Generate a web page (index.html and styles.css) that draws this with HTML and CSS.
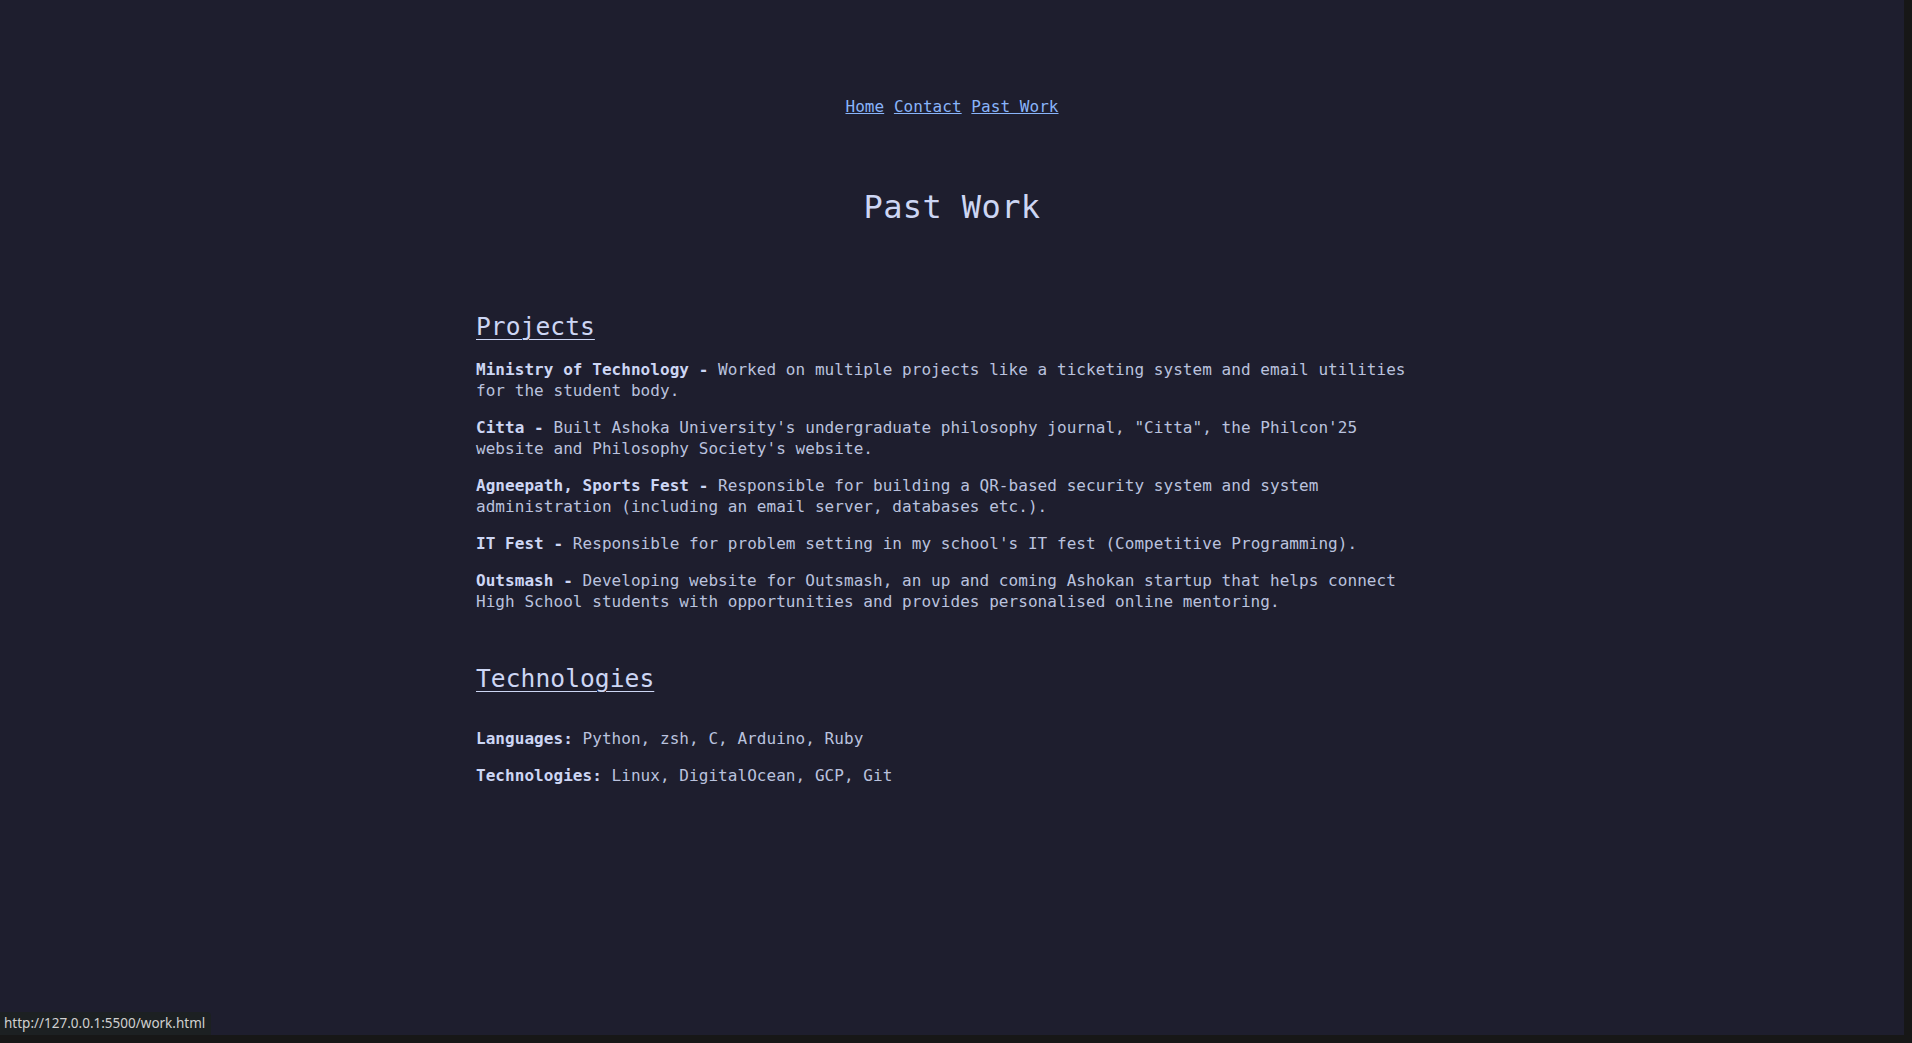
FILE: index.html
```html
<!DOCTYPE html>
<html lang="en">
<head>
<meta charset="utf-8">
<title>Past Work</title>
<link rel="stylesheet" href="styles.css">
</head>
<body>
<div class="page">
  <nav class="nav">
    <a href="#">Home</a> <a href="#">Contact</a> <a href="#">Past Work</a>
  </nav>
  <h1 class="title">Past Work</h1>
  <main class="content">
    <section class="section">
      <h2 class="section-title">Projects</h2>
      <p class="item"><strong>Ministry of Technology -</strong> Worked on multiple projects like a ticketing system and email utilities for the student body.</p>
      <p class="item"><strong>Citta -</strong> Built Ashoka University's undergraduate philosophy journal, "Citta", the Philcon'25 website and Philosophy Society's website.</p>
      <p class="item"><strong>Agneepath, Sports Fest -</strong> Responsible for building a QR-based security system and system administration (including an email server, databases etc.).</p>
      <p class="item"><strong>IT Fest -</strong> Responsible for problem setting in my school's IT fest (Competitive Programming).</p>
      <p class="item"><strong>Outsmash -</strong> Developing website for Outsmash, an up and coming Ashokan startup that helps connect High School students with opportunities and provides personalised online mentoring.</p>
    </section>
    <section class="section section-tech">
      <h2 class="section-title">Technologies</h2>
      <p class="item"><strong>Languages:</strong> Python, zsh, C, Arduino, Ruby</p>
      <p class="item"><strong>Technologies:</strong> Linux, DigitalOcean, GCP, Git</p>
    </section>
  </main>
</div>
<div class="statusbar">http://127.0.0.1:5500/work.html</div>
</body>
</html>
```
FILE: styles.css
```css
html {
  background: #171717;
  height: 100%;
}
body {
  margin: 0;
  width: 1904px;
  height: 1035px;
  background: #1e1e2e;
  color: #bac2de;
  font-family: "DejaVu Sans Mono", "Liberation Mono", monospace;
  font-size: 16px;
  line-height: 21px;
  letter-spacing: 0.05px;
  overflow: hidden;
}
.page {
  width: 952px;
  margin: 0 auto;
  padding-top: 96px;
}
.nav {
  text-align: center;
  height: 21px;
}
.nav a {
  color: #89b4fa;
  text-decoration: underline;
}
.title {
  margin: 69px 0 0;
  text-align: center;
  font-size: 32px;
  line-height: 42px;
  font-weight: normal;
  letter-spacing: 0.4px;
  color: #cdd6f4;
}
.content {
  margin-top: 83px;
}
.section-title {
  margin: 0 0 16px;
  font-size: 24.6px;
  line-height: 32px;
  font-weight: normal;
  color: #cdd6f4;
  text-decoration: underline;
  text-underline-offset: 4px;
  text-decoration-thickness: 1px;
}
.item {
  margin: 0 0 16px;
}
.item strong {
  color: #cdd6f4;
  font-weight: bold;
}
.section-tech {
  margin-top: 51px;
}
.section-tech .section-title {
  margin-bottom: 33px;
}
.statusbar {
  position: fixed;
  left: 0;
  bottom: 8px;
  height: 23px;
  padding: 0 6px 0 4px;
  background: #1c2022;
  color: #d0d0d0;
  font-family: "Noto Sans", "Open Sans", sans-serif;
  font-size: 13.5px;
  line-height: 23px;
  letter-spacing: 0;
  border-top-right-radius: 4px;
}
```
